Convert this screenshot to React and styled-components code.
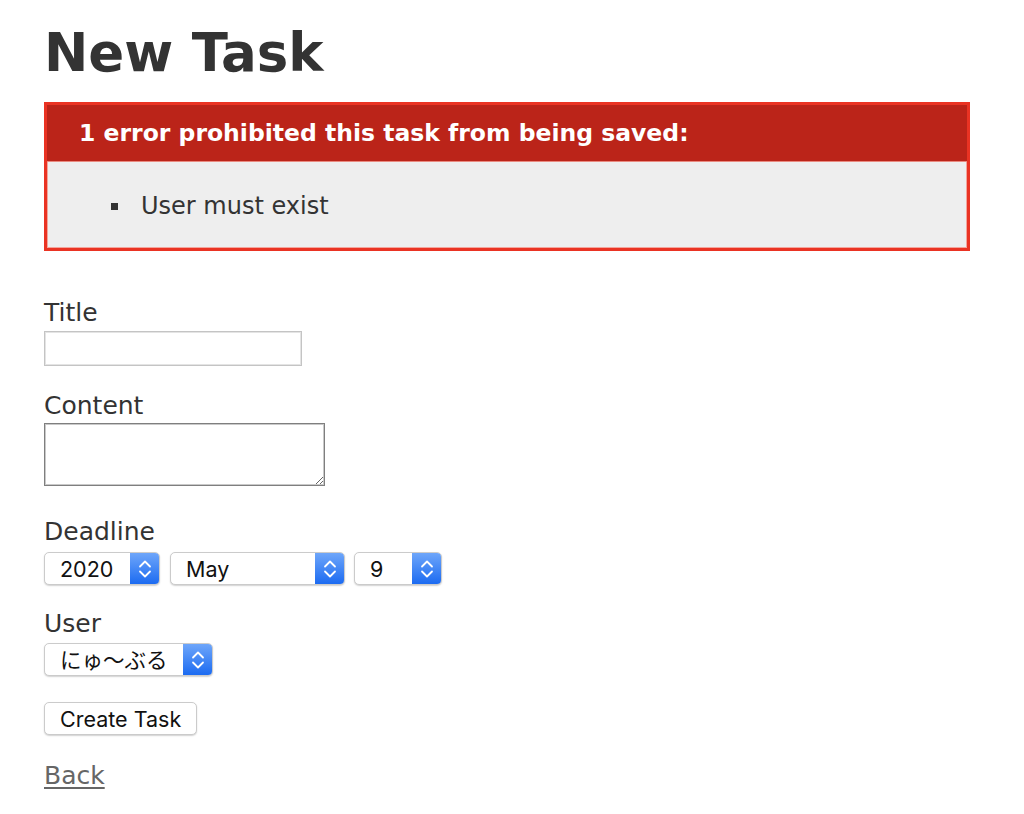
import React from "react";
import styled, { createGlobalStyle } from "styled-components";

const GlobalStyle = createGlobalStyle`
  html, body { margin: 0; padding: 0; background: #fff; }
  body {
    color: #333;
    font-family: "DejaVu Sans", Verdana, sans-serif;
  }
  * { box-sizing: border-box; }
`;

const Page = styled.div`
  padding: 22px 0 40px 44px;
`;

const Heading = styled.h1`
  margin: 0 0 18px;
  font-size: 53px;
  line-height: 62px;
  font-weight: bold;
  color: #333;
`;

const ErrorBox = styled.div`
  width: 926px;
  border: 3px solid #ea3323;
  background: #eeeeee;
  margin-bottom: 47px;
  box-shadow: inset 0 0 0 1px #f3a59c;
`;

const ErrorTitle = styled.h2`
  margin: 0;
  height: 57px;
  line-height: 57px;
  padding-left: 32px;
  font-size: 23.5px;
  font-weight: bold;
  color: #fff;
  background: #bb2419;
  border-bottom: 1px solid #e98a80;
  white-space: nowrap;
`;

const ErrorList = styled.ul`
  margin: 0;
  padding: 30px 0 27px 64px;
  list-style: none;
  font-size: 24px;
  line-height: 29px;
  color: #333;
`;

const ErrorItem = styled.li`
  display: flex;
  align-items: center;
  gap: 23px;
  &::before {
    content: "";
    width: 7px;
    height: 7px;
    background: #333;
    flex: none;
  }
`;

const Form = styled.form`
  display: flex;
  flex-direction: column;
  align-items: flex-start;
`;

const Field = styled.div`
  display: flex;
  flex-direction: column;
  align-items: flex-start;
  gap: ${(p) => p.$gap}px;
  margin-bottom: ${(p) => p.$after}px;
`;

const Label = styled.label`
  font-size: 25px;
  line-height: 30px;
  color: #333;
`;

const TextInput = styled.input`
  width: 258px;
  height: 35px;
  border: 1px solid #c4c4c4;
  box-shadow: inset 0 0 0 1px #e4e4e4;
  background: #fff;
  padding: 0 6px;
  font-size: 20px;
  outline: none;
`;

const TextArea = styled.textarea`
  width: 281px;
  height: 63px;
  border: 1px solid #7f7f7f;
  box-shadow: inset 0 0 0 1px #c9c9c9;
  background: #fff;
  padding: 4px 6px;
  font-size: 18px;
  display: block;
  resize: both;
  outline: none;
`;

const SelectRow = styled.div`
  display: flex;
  gap: ${(p) => p.$gap || 10}px;
`;

const SelectBox = styled.div`
  display: inline-flex;
  width: ${(p) => p.$w}px;
  height: 33px;
  border: 1px solid #cbcbcb;
  border-radius: 5px;
  background: #fff;
  box-shadow: 0 1px 1.5px rgba(0, 0, 0, 0.18);
  overflow: hidden;
`;

const NativeSelect = styled.select`
  appearance: none;
  -webkit-appearance: none;
  border: 0;
  background: transparent;
  flex: 1;
  min-width: 0;
  padding: 0 0 0 15px;
  font-family: Inter, "Noto Sans CJK JP", sans-serif;
  font-size: 21.5px;
  color: #111;
  outline: none;
`;

const Cap = styled.span`
  width: 29px;
  flex: none;
  display: flex;
  align-items: center;
  justify-content: center;
  background: linear-gradient(#6ea6fa, #1c6bf1);
`;

const Button = styled.button`
  height: 33px;
  padding: 0 15px;
  border: 1px solid #cbcbcb;
  border-radius: 5px;
  background: #fff;
  box-shadow: 0 1px 1.5px rgba(0, 0, 0, 0.18);
  font-family: Inter, sans-serif;
  font-size: 21.5px;
  color: #111;
  margin-bottom: 26px;
`;

const BackLink = styled.a`
  font-size: 25px;
  line-height: 30px;
  color: #666;
  text-decoration: underline;
  text-underline-offset: 3px;
  text-decoration-thickness: 1.5px;
`;

const Chevrons = () => (
  <svg width="16" height="22" viewBox="-8 -11 16 22">
    <path
      d="M-5 -2.5 L0 -7.5 L5 -2.5 M-5 2.5 L0 7.5 L5 2.5"
      fill="none"
      stroke="#fff"
      strokeWidth="1.8"
      strokeLinecap="round"
      strokeLinejoin="round"
    />
  </svg>
);

const Select = ({ w, value, options, name }) => (
  <SelectBox $w={w}>
    <NativeSelect name={name} defaultValue={value}>
      {options.map((o) => (
        <option key={o} value={o}>
          {o}
        </option>
      ))}
    </NativeSelect>
    <Cap>
      <Chevrons />
    </Cap>
  </SelectBox>
);

const years = ["2015", "2016", "2017", "2018", "2019", "2020", "2021", "2022", "2023", "2024", "2025"];
const months = [
  "January", "February", "March", "April", "May", "June",
  "July", "August", "September", "October", "November", "December",
];
const days = Array.from({ length: 31 }, (_, i) => String(i + 1));

export default function App() {
  return (
    <>
      <GlobalStyle />
      <Page>
        <Heading>New Task</Heading>
        <ErrorBox>
          <ErrorTitle>1 error prohibited this task from being saved:</ErrorTitle>
          <ErrorList>
            <ErrorItem>User must exist</ErrorItem>
          </ErrorList>
        </ErrorBox>
        <Form onSubmit={(e) => e.preventDefault()}>
          <Field $gap={3} $after={25}>
            <Label htmlFor="task_title">Title</Label>
            <TextInput id="task_title" type="text" />
          </Field>
          <Field $gap={2} $after={31}>
            <Label htmlFor="task_content">Content</Label>
            <TextArea id="task_content" />
          </Field>
          <Field $gap={5} $after={24}>
            <Label>Deadline</Label>
            <SelectRow>
              <Select w={116} value="2020" options={years} />
              <SelectRow $gap={9}>
                <Select w={175} value="May" options={months} />
                <Select w={88} value="9" options={days} />
              </SelectRow>
            </SelectRow>
          </Field>
          <Field $gap={4} $after={26}>
            <Label>User</Label>
            <Select w={169} value="にゅ〜ぶる" options={["にゅ〜ぶる"]} />
          </Field>
          <Button type="submit">Create Task</Button>
          <BackLink href="#">Back</BackLink>
        </Form>
      </Page>
    </>
  );
}
